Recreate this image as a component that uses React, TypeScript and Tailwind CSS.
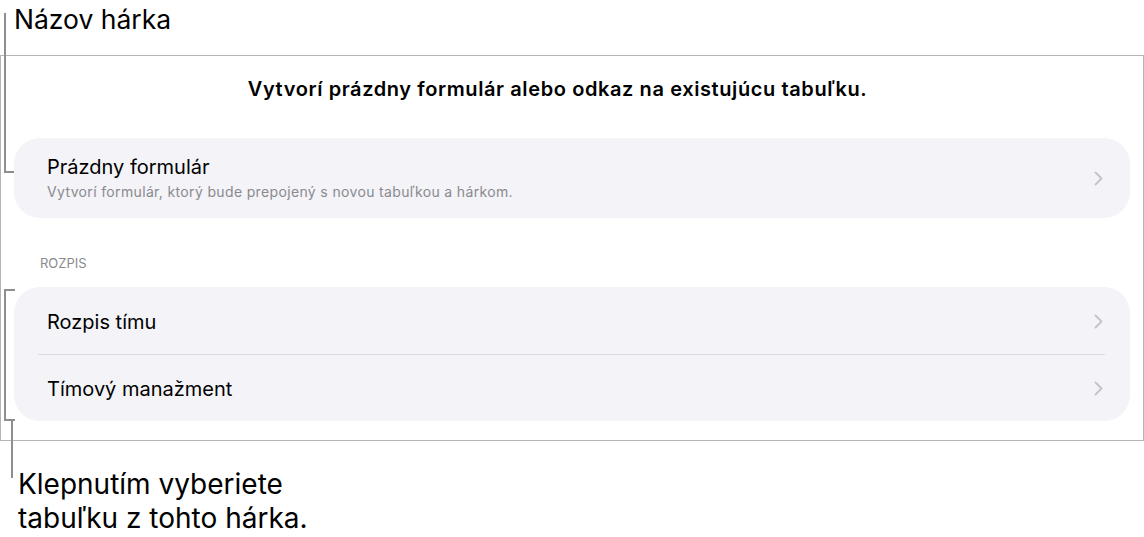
import { ReactNode } from "react";

function Chevron() {
  return (
    <svg width="9" height="15" viewBox="0 0 9 15" fill="none" className="shrink-0">
      <path d="M1.5 1.5 L7.5 7.5 L1.5 13.5" stroke="#c4c4c7" strokeWidth="1.8" strokeLinecap="round" strokeLinejoin="round" />
    </svg>
  );
}

function Row({ children, className = "" }: { children: ReactNode; className?: string }) {
  return (
    <div className={`flex items-center justify-between pl-[33px] pr-[27px] ${className}`}>
      <div className="flex flex-col">{children}</div>
      <Chevron />
    </div>
  );
}

export default function App() {
  return (
    <div className="relative w-[1144px] h-[537px] bg-white text-black" style={{ fontFamily: "Inter, 'Noto Sans', sans-serif" }}>
      {/* callout captions */}
      <div className="h-[55px] pl-[14px] pt-[2px] text-[26.5px] leading-[34px]">Názov hárka</div>

      <div className="border border-[#b5b5b5] h-[386px] pt-[21px]">
        <h2 className="text-center pr-[29px] text-[20px] leading-[24px] font-semibold tracking-[0.6px]">
          Vytvorí prázdny formulár alebo odkaz na existujúcu tabuľku.
        </h2>

        <div className="mx-[13px] mt-[37px] bg-[#f3f3f8] rounded-[26px] h-[80px] flex flex-col justify-center">
          <Row>
            <span className="text-[20px] leading-[24px]">Prázdny formulár</span>
            <span className="text-[14px] leading-[18px] text-[#8a8a8e] mt-[4px] tracking-[0.35px]">
              Vytvorí formulár, ktorý bude prepojený s novou tabuľkou a hárkom.
            </span>
          </Row>
        </div>

        <div className="pl-[39px] mt-[36px] text-[13px] leading-[18px] text-[#8a8a8e]">ROZPIS</div>

        <div className="mx-[13px] mt-[15px] bg-[#f3f3f8] rounded-[26px] h-[134px] flex flex-col">
          <Row className="h-[67px] pt-[2px]">
            <span className="text-[20px] leading-[24px]">Rozpis tímu</span>
          </Row>
          <div className="ml-[24px] mr-[25px] h-px bg-[#dcdce0]" />
          <Row className="h-[66px] pt-[1px]">
            <span className="text-[20px] leading-[24px]">Tímový manažment</span>
          </Row>
        </div>
      </div>

      <div className="pl-[18px] pt-[26px] text-[28px] leading-[34px]">
        Klepnutím vyberiete
        <br />
        tabuľku z tohto hárka.
      </div>

      {/* leader lines over the frame */}
      <div className="absolute left-[4px] top-[13px] w-[2px] h-[160px] bg-[#8e8e8e]" />
      <div className="absolute left-[4px] top-[171px] w-[10px] h-[2px] bg-[#8e8e8e]" />

      <div className="absolute left-[4px] top-[289px] w-[2px] h-[132px] bg-[#8e8e8e]" />
      <div className="absolute left-[4px] top-[289px] w-[11px] h-[2px] bg-[#8e8e8e]" />
      <div className="absolute left-[4px] top-[419px] w-[11px] h-[2px] bg-[#8e8e8e]" />
      <div className="absolute left-[11px] top-[420px] w-[2px] h-[58px] bg-[#8e8e8e]" />
    </div>
  );
}
